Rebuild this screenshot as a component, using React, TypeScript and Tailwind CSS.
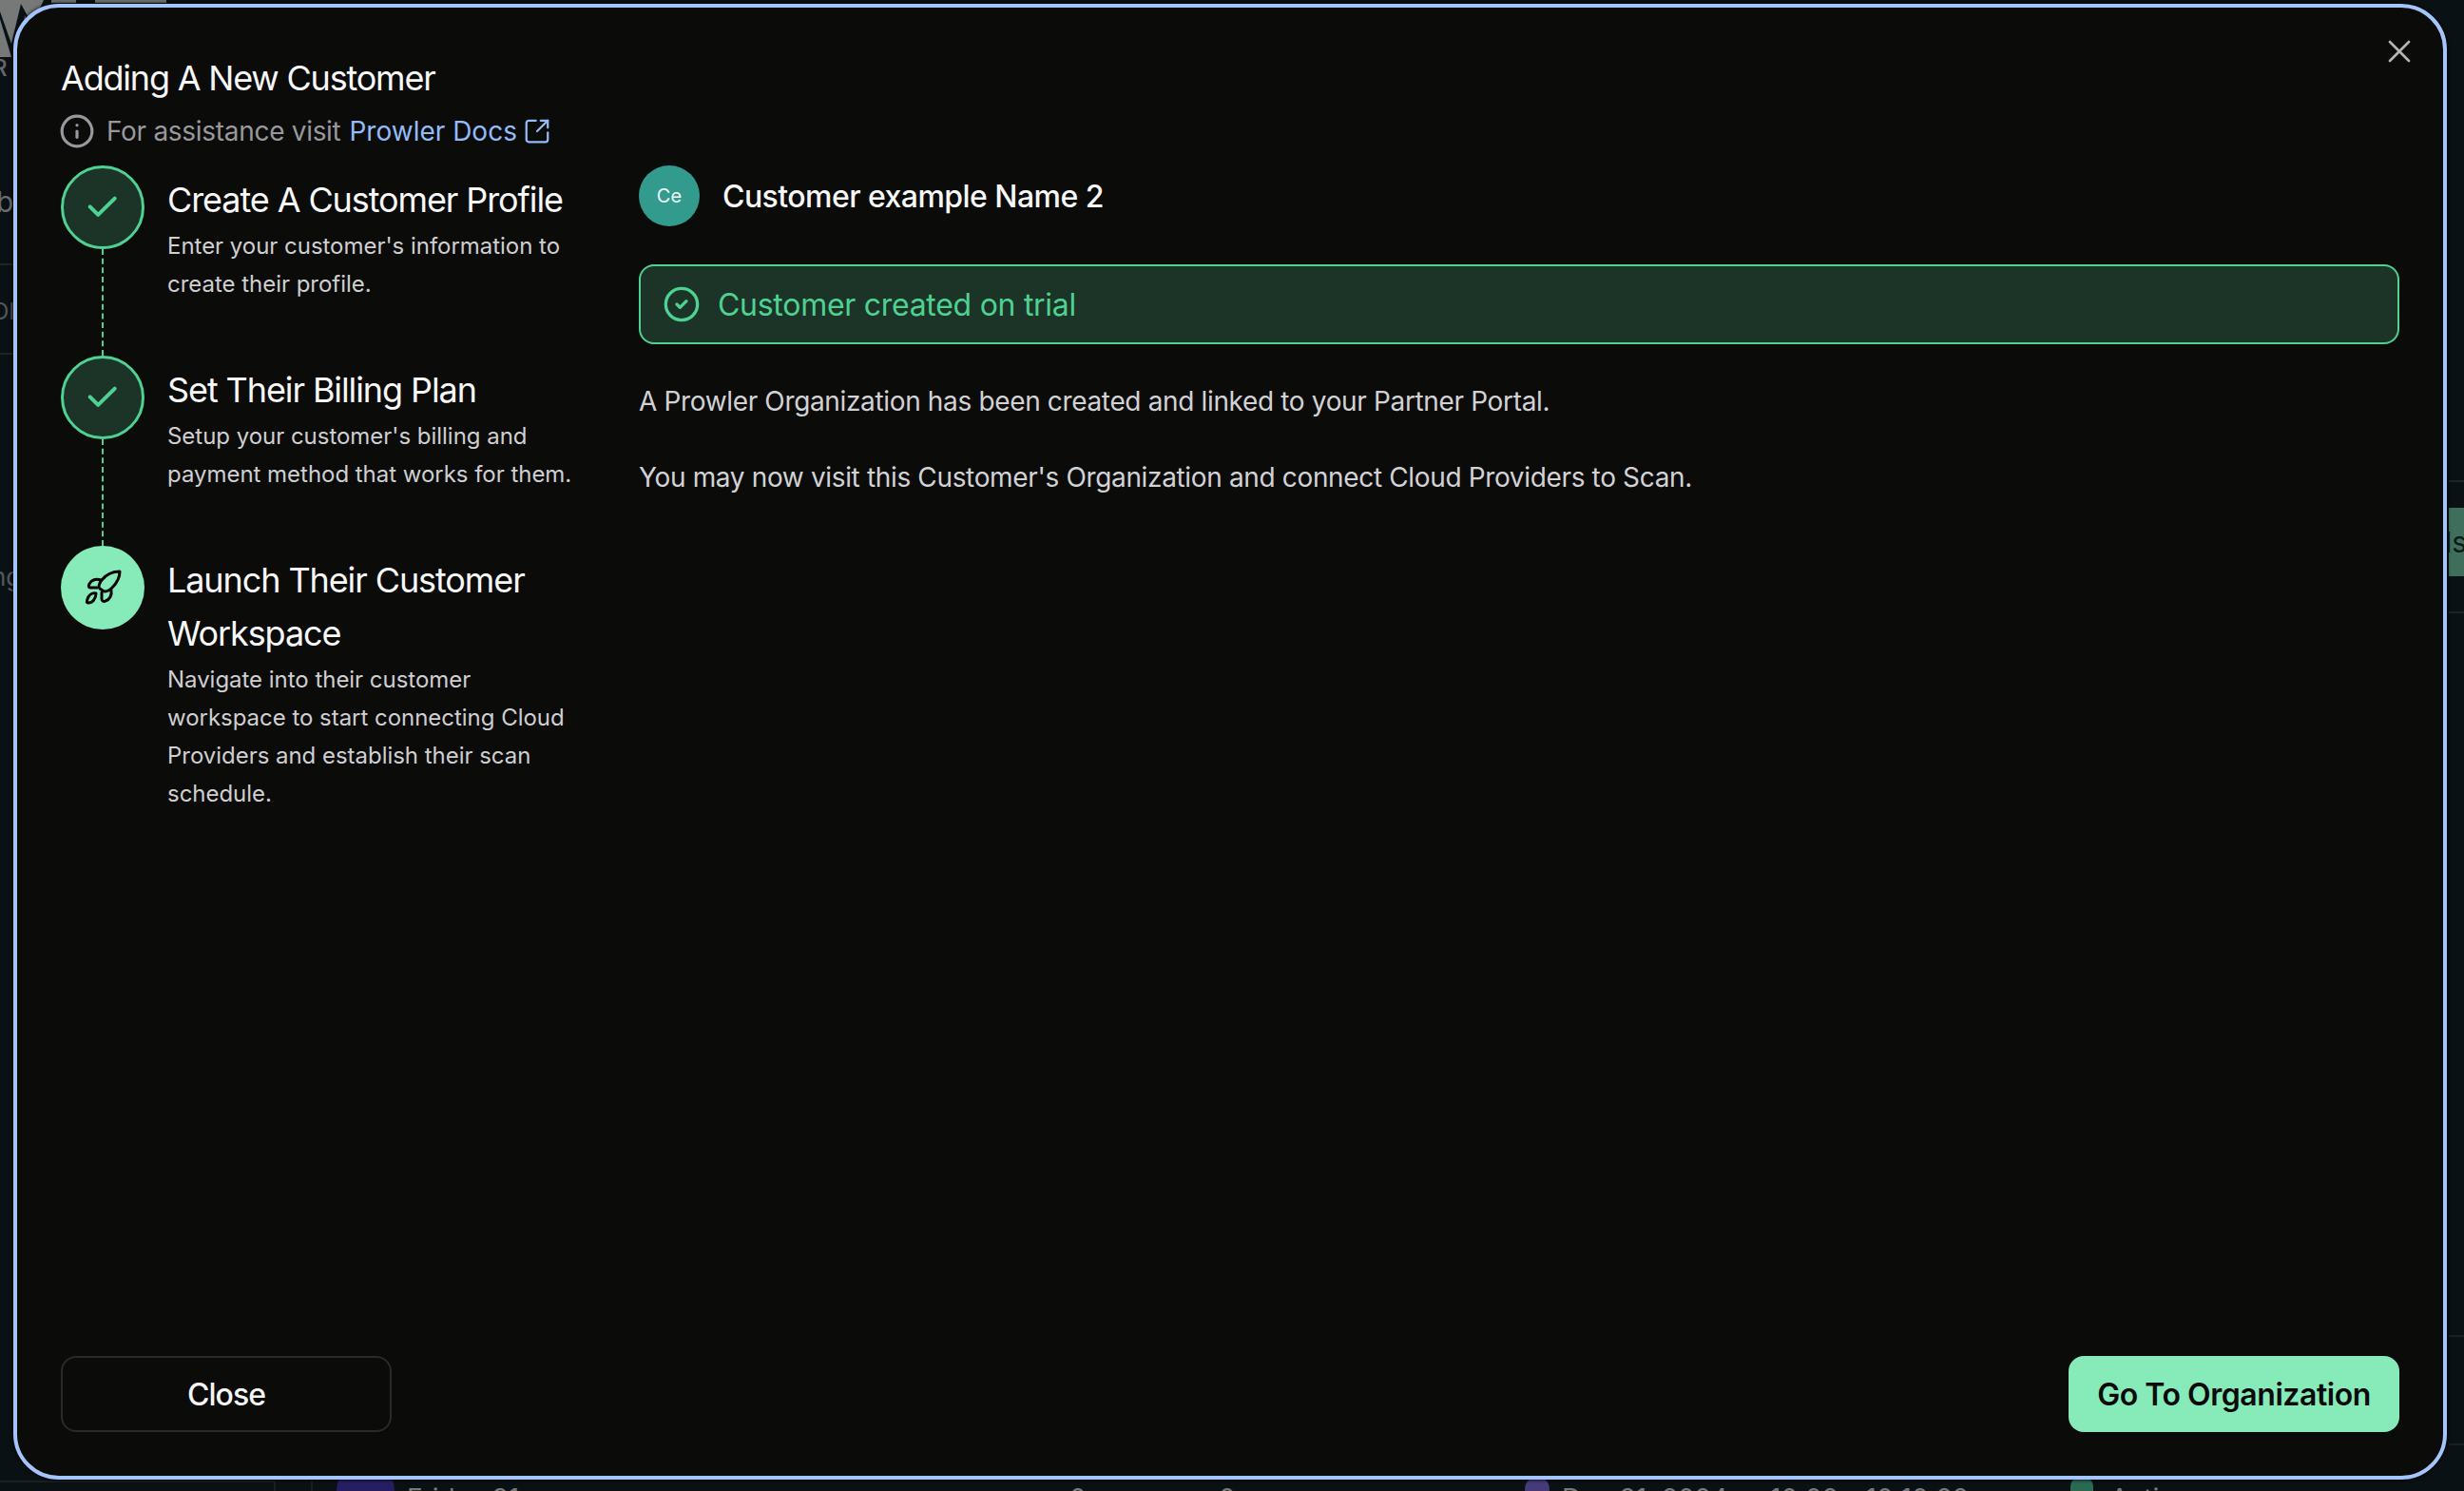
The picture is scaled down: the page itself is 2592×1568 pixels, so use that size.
import { Info, SquareArrowOutUpRight, CircleCheck, X } from "lucide-react";

function Check() {
  return (
    <svg viewBox="0 0 88 88" className="w-[80px] h-[80px]" fill="none" stroke="#4fd192" strokeWidth="4.4" strokeLinecap="round" strokeLinejoin="round">
      <path d="M29.3 43.3 38.7 52.7 58 33.7" />
    </svg>
  );
}

function Rocket() {
  return (
    <svg viewBox="0 0 88 88" className="w-[88px] h-[88px]" fill="none" stroke="#050505" strokeWidth="3" strokeLinecap="round" strokeLinejoin="round">
      <path d="M62 27C54 27 47 31 43 36C40 40 39 43 41 45L44 47C47 49 50 48 54 44C59 39 62 33 62 27Z" />
      <path d="M42 36C37 34 32 36 30 40C29 42 29 44 31 44L38 44" />
      <path d="M53 47C54 52 51 57 47 58C45 59 43 58 43 56L43 49" />
      <path d="M37 50C32 49 29 53 28 56C27 59 27 60 29 60C33 60 37 56 37 50Z" />
    </svg>
  );
}

function Step({ title, desc, state, last }: { title: string[]; desc: string[]; state: "done" | "active"; last?: boolean }) {
  return (
    <div className={last ? "flex gap-[24px]" : "flex gap-[24px] h-[200px]"}>
      <div className="flex flex-col items-center w-[88px] shrink-0">
        {state === "done" ? (
          <div className="w-[88px] h-[88px] rounded-full border-[3px] border-[#4fd192] bg-[#1c3327] flex items-center justify-center shrink-0">
            <Check />
          </div>
        ) : (
          <div className="w-[88px] h-[88px] rounded-full bg-[#86ebb9] flex items-center justify-center shrink-0">
            <Rocket />
          </div>
        )}
        {!last && <div className="flex-1 border-l-2 border-dashed border-[#4fd192]" />}
      </div>
      <div className="pt-[8px] w-[450px]">
        <div className="text-[36px] leading-[56px] tracking-[-1.1px] text-[#f7f7f7]">
          {title.map((t) => (
            <div key={t}>{t}</div>
          ))}
        </div>
        <div className="mt-[1px] text-[24px] leading-[40px] tracking-[-0.03px] text-[#cfcfd2]">
          {desc.map((t) => (
            <div key={t}>{t}</div>
          ))}
        </div>
      </div>
    </div>
  );
}

export default function App() {
  return (
    <div className="relative w-[2592px] h-[1568px] overflow-hidden bg-[#0a1114] font-['Inter',sans-serif]">
      {/* page behind the dialog */}
      <svg className="absolute left-0 top-0 w-[60px] h-[70px]" viewBox="0 0 60 70" fill="#777878">
        <path d="M0 0H46L34 26 22 4 12 46 0 12Z" />
        <path d="M0 20 12 60H0Z" />
        <path d="M26 16 34 34 20 56Z" />
      </svg>
      <div className="absolute left-[54px] -top-[2px] w-[26px] h-[5px] bg-[#6f7070]" />
      <div className="absolute left-[100px] -top-[2px] w-[75px] h-[5px] bg-[#6f7070]" />
      <div className="absolute -left-[8px] top-[58px] text-[24px] leading-[28px] font-medium text-[#66686a]">R</div>
      <div className="absolute -left-[4px] top-[194px] text-[30px] leading-[36px] text-[#6a6c6e]">b</div>
      <div className="absolute left-0 top-[277px] w-[14px] h-[2px] bg-[#1f2527]" />
      <div className="absolute -left-[9px] top-[314px] text-[24px] leading-[28px] text-[#55585a]">OI</div>
      <div className="absolute left-0 top-[371px] w-[14px] h-[2px] bg-[#1f2527]" />
      <div className="absolute -left-[9px] top-[592px] text-[26px] leading-[30px] text-[#55585a]">ng</div>

      <div className="absolute left-[2576px] top-[505px] w-[16px] h-[2px] bg-[#1f2527]" />
      <div className="absolute left-[2576px] top-[534px] w-[16px] h-[72px] bg-[#3f6f5c] text-[30px] leading-[72px] text-[#0b1a16] overflow-hidden">
        <span className="block -ml-[4px]">ls</span>
      </div>
      <div className="absolute left-[2576px] top-[643px] w-[16px] h-[2px] bg-[#1f2527]" />
      <div className="absolute left-[2576px] top-[1404px] w-[16px] h-[2px] bg-[#1a2022]" />
      <div className="absolute left-[2576px] top-[1518px] w-[16px] h-[2px] bg-[#1a2022]" />

      <div className="absolute left-0 top-[1557px] w-[288px] h-[2px] bg-[#1a2022]" />
      <div className="absolute left-[288px] top-[1557px] w-[2px] h-[11px] bg-[#1a2022]" />
      <div className="absolute left-[327px] top-[1557px] w-[2px] h-[11px] bg-[#1a2022]" />
      <div className="absolute left-[354px] top-[1537px] w-[61px] h-[61px] rounded-full bg-[#241f63]" />
      <div className="absolute left-[428px] top-[1559px] text-[28px] leading-[34px] text-[#77797b]">Friday 31</div>
      <div className="absolute left-[1125px] top-[1559px] text-[28px] leading-[34px] text-[#77797b]">0</div>
      <div className="absolute left-[1282px] top-[1559px] text-[28px] leading-[34px] text-[#77797b]">0</div>
      <div className="absolute left-[1604px] top-[1553px] w-[26px] h-[26px] rounded-full bg-[#463a78]" />
      <div className="absolute left-[1643px] top-[1559px] text-[28px] leading-[34px] text-[#77797b]">Dec 31, 2024</div>
      <div className="absolute left-[1862px] top-[1559px] text-[28px] leading-[34px] text-[#77797b]">10:02 - 10:10:22</div>
      <div className="absolute left-[2178px] top-[1553px] w-[24px] h-[26px] rounded-[10px] bg-[#2b6a52]" />
      <div className="absolute left-[2220px] top-[1559px] text-[28px] leading-[34px] text-[#77797b]">Active</div>

      {/* dialog */}
      <div className="relative pl-[14px] pt-[4px]">
        <div className="relative flex flex-col w-[2560px] h-[1552px] rounded-[48px] border-4 border-[#a4c5fb] bg-[#0b0b0a] shadow-[0_0_4px_#000] px-[46px] pt-[46px] pb-[46px]">
          <X className="absolute right-[26px] top-[26px] w-[40px] h-[40px] text-[#b4b4b0]" strokeWidth={1.6} />

          <div className="text-[36px] leading-[56px] tracking-[-1.2px] text-[#f7f7f7]">Adding A New Customer</div>
          <div className="mt-[8px] flex items-center h-[40px] text-[28px] text-[#98989d]">
            <Info className="w-[38px] h-[38px] mr-[12px] -ml-[2px]" strokeWidth={2} />
            <span className="tracking-[-0.3px]">For assistance visit</span>
            <span className="ml-[9px] text-[#93bbf8]">Prowler Docs</span>
            <SquareArrowOutUpRight className="ml-[6px] w-[30px] h-[30px] text-[#93bbf8]" strokeWidth={1.8} />
          </div>

          <div className="mt-[16px] flex flex-1">
            <div className="w-[608px] shrink-0 flex flex-col">
              <Step
                state="done"
                title={["Create A Customer Profile"]}
                desc={["Enter your customer's information to", "create their profile."]}
              />
              <Step
                state="done"
                title={["Set Their Billing Plan"]}
                desc={["Setup your customer's billing and", "payment method that works for them."]}
              />
              <Step
                state="active"
                last
                title={["Launch Their Customer", "Workspace"]}
                desc={[
                  "Navigate into their customer",
                  "workspace to start connecting Cloud",
                  "Providers and establish their scan",
                  "schedule.",
                ]}
              />
            </div>

            <div className="flex-1 flex flex-col">
              <div className="flex items-center gap-[24px] h-[64px]">
                <div className="w-[64px] h-[64px] rounded-full bg-[#339b8e] flex items-center justify-center text-[20px] text-[#eef8f6]">
                  Ce
                </div>
                <div className="pt-[2px] text-[32px] font-medium tracking-[-0.55px] text-[#f7f7f7]">Customer example Name 2</div>
              </div>
              <div className="mt-[40px] h-[84px] rounded-[16px] border-2 border-[#4fd192] bg-[#1c3327] flex items-center pl-[23px] gap-[18px] text-[32px] tracking-[-0.28px] text-[#4fd192]">
                <CircleCheck className="w-[40px] h-[40px]" strokeWidth={2} />
                <span className="pt-[2px]">Customer created on trial</span>
              </div>
              <div className="mt-[40px] text-[28px] leading-[40px] tracking-[-0.35px] text-[#d2d2d5]">
                A Prowler Organization has been created and linked to your Partner Portal.
              </div>
              <div className="mt-[40px] text-[28px] leading-[40px] tracking-[-0.35px] text-[#d2d2d5]">
                You may now visit this Customer's Organization and connect Cloud Providers to Scan.
              </div>
            </div>
          </div>

          <div className="flex justify-between">
            <button className="w-[348px] h-[80px] pt-[2px] rounded-[16px] border-2 border-[#2a2a2a] text-[32px] font-medium tracking-[-1px] text-[#f5f5f5]">
              Close
            </button>
            <button className="w-[348px] h-[80px] pt-[2px] rounded-[16px] bg-[#86ebb9] text-[32px] font-semibold tracking-[-0.45px] text-[#0a0a0a]">
              Go To Organization
            </button>
          </div>
        </div>
      </div>
    </div>
  );
}
